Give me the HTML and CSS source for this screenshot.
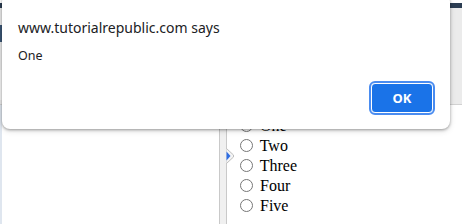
FILE: index.html
```html
<!DOCTYPE html>
<html>
<head>
<meta charset="utf-8">
<link rel="stylesheet" href="styles.css">
</head>
<body>
<div class="page">
  <div class="topgap"></div>
  <div class="navbar"></div>
  <div class="toolbar">
    <div class="tool-tab"></div>
    <div class="tool-light"></div>
  </div>
  <div class="main">
    <div class="left-pane"></div>
    <div class="splitter">
      <div class="handle">
        <svg width="8" height="16" viewBox="0 0 8 16">
          <path d="M0.5 0.5 L7.5 7 L7.5 9 L0.5 15.5" fill="#f4f4f4" stroke="#bdbdbd" stroke-width="1"/>
          <path d="M0.5 3.5 L4.5 8 L0.5 12.5 Z" fill="#2f6de1"/>
        </svg>
      </div>
    </div>
    <div class="right-pane">
      <label class="opt"><input type="radio" name="n"> One</label>
      <label class="opt"><input type="radio" name="n"> Two</label>
      <label class="opt"><input type="radio" name="n"> Three</label>
      <label class="opt"><input type="radio" name="n"> Four</label>
      <label class="opt"><input type="radio" name="n"> Five</label>
    </div>
  </div>
</div>

<div class="dialog">
  <div class="dlg-title">www.tutorialrepublic.com says</div>
  <div class="dlg-msg">One</div>
  <div class="dlg-actions">
    <button class="ok">OK</button>
  </div>
</div>
</body>
</html>
```
FILE: styles.css
```css
html, body {
  margin: 0;
  padding: 0;
  background: #ffffff;
  overflow: hidden;
}

.page {
  width: 462px;
  height: 224px;
  display: flex;
  flex-direction: column;
}

.topgap {
  height: 3px;
  background: #ffffff;
}

.navbar {
  height: 5px;
  background: #2b3d52;
}

.toolbar {
  height: 96px;
  background: #ebebeb;
  border-bottom: 1px solid #d2d2d2;
  display: flex;
  flex-direction: column;
}

.tool-tab {
  width: 4px;
  height: 17px;
  margin-top: 17px;
  background: #3b5675;
}

.tool-light {
  width: 4px;
  height: 30px;
  margin-top: 28px;
  background: #f6f6f6;
}

.main {
  flex: 1;
  display: flex;
}

.left-pane {
  width: 219px;
  background: #ffffff;
  box-shadow: inset 2px 0 0 #dfe6ef;
}

.splitter {
  width: 6px;
  background: #f0f0f0;
  border-left: 1px solid #c9c9c9;
  border-right: 1px solid #c9c9c9;
  position: relative;
}

.handle {
  position: absolute;
  left: 6px;
  top: 43px;
  width: 8px;
  height: 16px;
}

.handle svg {
  display: block;
}

.right-pane {
  flex: 1;
  padding: 11px 0 0 8px;
  display: flex;
  flex-direction: column;
  font-family: "Liberation Serif", "Times New Roman", serif;
  font-size: 16px;
  color: #000;
}

.opt {
  line-height: 20px;
  height: 20px;
  white-space: nowrap;
}

.opt input {
  margin: 3px 3px 0 5px;
  width: 13px;
  height: 13px;
  vertical-align: -1px;
}

.dialog {
  position: absolute;
  left: 2px;
  top: -6px;
  width: 448px;
  height: 135px;
  background: #ffffff;
  border-radius: 8px;
  box-shadow: 0 1px 3px rgba(0, 0, 0, 0.35), 0 2px 6px rgba(0, 0, 0, 0.12);
  font-family: "Noto Sans", "Open Sans", sans-serif;
  box-sizing: border-box;
  padding: 24px 16px 0 16px;
  display: flex;
  flex-direction: column;
}

.dlg-title {
  font-size: 14px;
  line-height: 20px;
  color: #202124;
}

.dlg-msg {
  margin-top: 9px;
  font-size: 12.5px;
  line-height: 18px;
  color: #202124;
}

.dlg-actions {
  display: flex;
  justify-content: flex-end;
  margin-top: 18px;
  padding-right: 1px;
}

.ok {
  width: 62px;
  height: 30px;
  box-sizing: border-box;
  background: #1a73e8;
  color: #ffffff;
  border: 1px solid #ffffff;
  border-radius: 4px;
  outline: 2px solid #4a8cf0;
  outline-offset: 0;
  font-family: "Noto Sans", "Open Sans", sans-serif;
  font-size: 13px;
  font-weight: 700;
  padding: 0;
}
```
